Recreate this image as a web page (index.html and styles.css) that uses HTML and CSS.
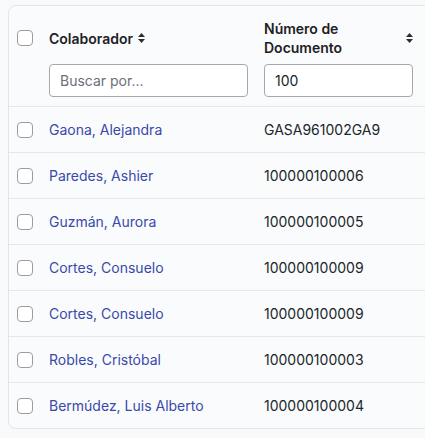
FILE: index.html
```html
<!DOCTYPE html>
<html lang="es">
<head>
<meta charset="utf-8">
<link rel="stylesheet" href="styles.css">
</head>
<body>
<div class="scroller">
<div class="card">
  <div class="row head">
    <div class="cell check"><span class="box"></span></div>
    <div class="cell c1">
      <div class="title"><span>Colaborador</span><svg class="sort" viewBox="0 0 7 10"><path d="M3.5 0 L7 4 H0 Z M0 6 H7 L3.5 10 Z"/></svg></div>
      <input class="filter" type="text" placeholder="Buscar por...">
    </div>
    <div class="cell c2">
      <div class="title spread"><span>Número de<br>Documento</span><svg class="sort" viewBox="0 0 7 10"><path d="M3.5 0 L7 4 H0 Z M0 6 H7 L3.5 10 Z"/></svg></div>
      <input class="filter" type="text" value="100">
    </div>
    <div class="cell rest"></div>
  </div>
  <div class="row"><div class="cell check"><span class="box"></span></div><div class="cell c1"><a class="link">Gaona, Alejandra</a></div><div class="cell c2">GASA961002GA9</div><div class="cell rest"></div></div>
  <div class="row"><div class="cell check"><span class="box"></span></div><div class="cell c1"><a class="link">Paredes, Ashier</a></div><div class="cell c2">100000100006</div><div class="cell rest"></div></div>
  <div class="row"><div class="cell check"><span class="box"></span></div><div class="cell c1"><a class="link">Guzmán, Aurora</a></div><div class="cell c2">100000100005</div><div class="cell rest"></div></div>
  <div class="row"><div class="cell check"><span class="box"></span></div><div class="cell c1"><a class="link">Cortes, Consuelo</a></div><div class="cell c2">100000100009</div><div class="cell rest"></div></div>
  <div class="row"><div class="cell check"><span class="box"></span></div><div class="cell c1"><a class="link">Cortes, Consuelo</a></div><div class="cell c2">100000100009</div><div class="cell rest"></div></div>
  <div class="row"><div class="cell check"><span class="box"></span></div><div class="cell c1"><a class="link">Robles, Cristóbal</a></div><div class="cell c2">100000100003</div><div class="cell rest"></div></div>
  <div class="row last"><div class="cell check"><span class="box"></span></div><div class="cell c1"><a class="link">Bermúdez, Luis Alberto</a></div><div class="cell c2">100000100004</div><div class="cell rest"></div></div>
</div>
</div>
</body>
</html>
```
FILE: styles.css
```css
html, body {
  margin: 0;
  padding: 0;
  background: #f8f9fa;
  font-family: Inter, "Noto Sans", sans-serif;
  font-size: 14px;
  color: #212529;
}
.scroller {
  padding: 5px 0 0 8px;
  overflow: hidden;
}
.card {
  width: 520px;
  background: #fafbfc;
  border: 1px solid #e3e5e8;
  border-radius: 8px;
}
.row {
  display: flex;
  height: 45px;
  align-items: center;
  border-bottom: 1px solid #e5e7eb;
}
.row.last { border-bottom: none; }
.row.head {
  height: auto;
  align-items: flex-start;
  padding: 14px 0 9px;
}
.cell {
  padding: 0 8px;
  box-sizing: border-box;
}
.check { width: 32px; display: flex; align-items: center; }
.head .check { height: 36px; }
.c1 { width: 215px; }
.c2 { width: 165px; }
.rest { flex: 1; }
.box {
  display: block;
  width: 16px;
  height: 16px;
  box-sizing: border-box;
  border: 1px solid #9a9ea3;
  border-radius: 4px;
  background: #fff;
}
.title {
  display: flex;
  align-items: center;
  height: 36px;
  font-weight: 600;
  line-height: 19px;
  color: #1d2125;
  gap: 5px;
}
.title.spread { justify-content: space-between; }
.sort { width: 7px; height: 10px; fill: #2a2e33; }
.filter {
  display: block;
  margin-top: 8px;
  width: 100%;
  height: 33px;
  box-sizing: border-box;
  border: 1px solid #a4a8ad;
  border-radius: 4px;
  background: #fff;
  padding: 0 10px;
  font-family: Inter, "Noto Sans", sans-serif;
  font-size: 14px;
  color: #212529;
  outline: none;
}
.filter::placeholder { color: #6b7078; }
.link { color: #3949ab; text-decoration: none; }
```
